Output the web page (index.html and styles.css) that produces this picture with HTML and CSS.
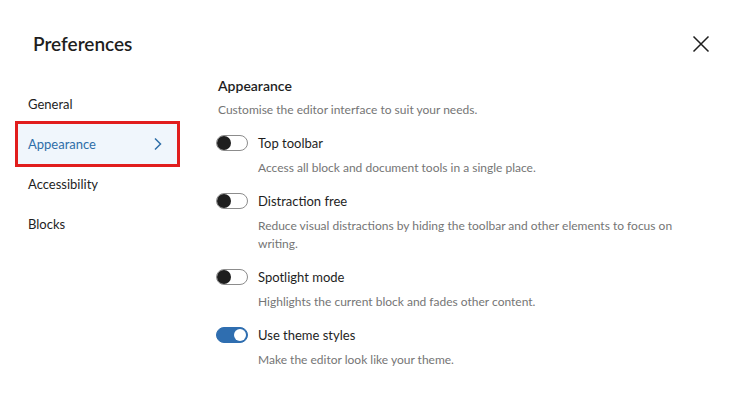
FILE: index.html
```html
<!DOCTYPE html>
<html lang="en">
<head>
    <meta charset="UTF-8">
    <meta name="viewport" content="width=device-width, initial-scale=1.0">
    <title>Preferences</title>
    <link rel="stylesheet" href="styles.css">
</head>
<body>
    <div class="modal">
        <div class="modal-header">
            <h1>Preferences</h1>
            <button class="close" aria-label="Close">
                <svg width="24" height="24" viewBox="0 0 24 24"><path d="M4.5 4.5 L19.5 19.5 M19.5 4.5 L4.5 19.5" stroke="#1e1e1e" stroke-width="1.5" fill="none"/></svg>
            </button>
        </div>

        <div class="modal-body">
            <nav class="tabs">
                <div class="tab">General</div>
                <div class="tab active">
                    <span>Appearance</span>
                    <svg width="24" height="24" viewBox="0 0 24 24"><path d="M10 6.5 L15.5 12 L10 17.5" stroke="#2f6ea8" stroke-width="1.5" fill="none"/></svg>
                </div>
                <div class="tab">Accessibility</div>
                <div class="tab">Blocks</div>
            </nav>

            <section class="panel">
                <h2>Appearance</h2>
                <p class="panel-desc">Customise the editor interface to suit your needs.</p>

                <div class="option">
                    <div class="option-row">
                        <span class="toggle"></span>
                        <label>Top toolbar</label>
                    </div>
                    <p class="help">Access all block and document tools in a single place.</p>
                </div>

                <div class="option">
                    <div class="option-row">
                        <span class="toggle"></span>
                        <label>Distraction free</label>
                    </div>
                    <p class="help">Reduce visual distractions by hiding the toolbar and other elements to focus on writing.</p>
                </div>

                <div class="option">
                    <div class="option-row">
                        <span class="toggle"></span>
                        <label>Spotlight mode</label>
                    </div>
                    <p class="help">Highlights the current block and fades other content.</p>
                </div>

                <div class="option">
                    <div class="option-row">
                        <span class="toggle on"></span>
                        <label>Use theme styles</label>
                    </div>
                    <p class="help">Make the editor look like your theme.</p>
                </div>
            </section>
        </div>
    </div>
</body>
</html>
```

FILE: styles.css
```css
body {
    margin: 0;
    background-color: #ffffff;
    font-family: Lato, 'Open Sans', sans-serif;
    color: #1e1e1e;
}

.modal {
    width: 747px;
    height: 404px;
    background-color: #fff;
}

.modal-header {
    display: flex;
    align-items: center;
    justify-content: space-between;
    padding: 30px 34px 0 33px;
    height: 28px;
}

h1 {
    margin: 0;
    font-size: 19px;
    font-weight: 600;
    line-height: 28px;
}

.close {
    background: none;
    border: none;
    padding: 0;
    width: 24px;
    height: 24px;
    cursor: pointer;
}

.modal-body {
    display: flex;
    padding: 26px 0 0 18px;
}

.tabs {
    width: 159px;
    flex-shrink: 0;
}

.tab {
    display: flex;
    align-items: center;
    justify-content: space-between;
    height: 40px;
    padding: 0 14px 0 10px;
    font-size: 13px;
    color: #1e1e1e;
}

.tab.active {
    background-color: #f0f6fc;
    color: #2f6ea8;
    outline: 3px solid #e11d1d;
}

.tab.active svg {
    margin-right: -6px;
}

.panel {
    margin-left: 41px;
    margin-top: -8px;
}

h2 {
    margin: 0;
    font-size: 14px;
    font-weight: 600;
    line-height: 20px;
}

.panel-desc {
    margin: 5px 0 14px;
    font-size: 12px;
    line-height: 18px;
    color: #757575;
}

.option {
    margin-bottom: 14px;
}

.option-row {
    display: flex;
    align-items: center;
    height: 20px;
    margin-left: -2px;
}

.option-row label {
    font-size: 13px;
    margin-left: 10px;
}

.toggle {
    position: relative;
    box-sizing: border-box;
    width: 32px;
    height: 16px;
    border: 1px solid #8c8c8c;
    border-radius: 8px;
    background-color: #fff;
}

.toggle::after {
    content: "";
    position: absolute;
    top: 0;
    left: 0;
    width: 14px;
    height: 14px;
    border-radius: 50%;
    background-color: #1e1e1e;
}

.toggle.on {
    background-color: #2f6eb0;
    border-color: #2f6eb0;
}

.toggle.on::after {
    left: auto;
    right: 1px;
    top: 1px;
    width: 12px;
    height: 12px;
    background-color: #fff;
}

.help {
    margin: 6px 0 0 40px;
    max-width: 430px;
    font-size: 12px;
    line-height: 18px;
    color: #757575;
}
```
